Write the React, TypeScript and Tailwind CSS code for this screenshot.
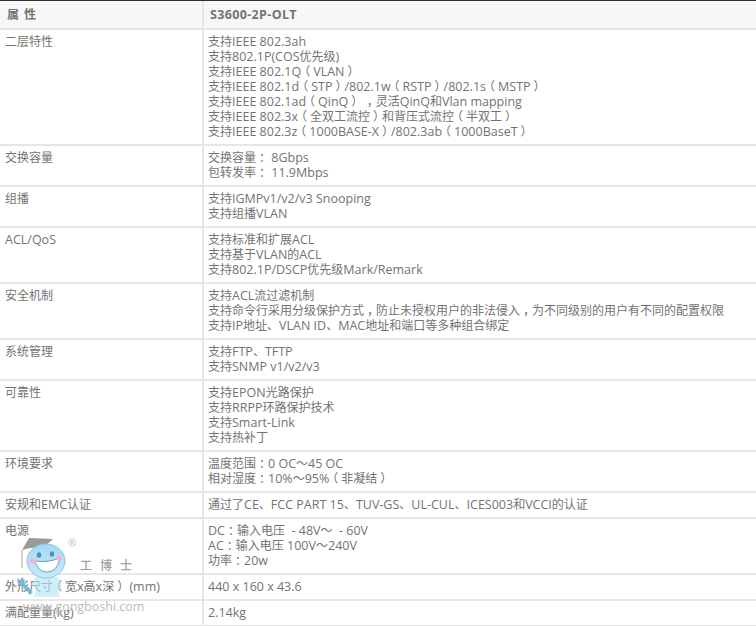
const rows: [string, string[]][] = [
  ["二层特性", ["支持IEEE 802.3ah", "支持802.1P(COS优先级)", "支持IEEE 802.1Q（VLAN）", "支持IEEE 802.1d（STP）/802.1w（RSTP）/802.1s（MSTP）", "支持IEEE 802.1ad（QinQ）\u00a0，灵活QinQ和Vlan mapping", "支持IEEE 802.3x（全双工流控）和背压式流控（半双工）", "支持IEEE 802.3z（1000BASE-X）/802.3ab（1000BaseT）"]],
  ["交换容量", ["交换容量： 8Gbps", "包转发率： 11.9Mbps"]],
  ["组播", ["支持IGMPv1/v2/v3 Snooping", "支持组播VLAN"]],
  ["ACL/QoS", ["支持标准和扩展ACL", "支持基于VLAN的ACL", "支持802.1P/DSCP优先级Mark/Remark"]],
  ["安全机制", ["支持ACL流过滤机制", "支持命令行采用分级保护方式，防止未授权用户的非法侵入，为不同级别的用户有不同的配置权限", "支持IP地址、VLAN ID、MAC地址和端口等多种组合绑定"]],
  ["系统管理", ["支持FTP、TFTP", "支持SNMP v1/v2/v3"]],
  ["可靠性", ["支持EPON光路保护", "支持RRPP环路保护技术", "支持Smart-Link", "支持热补丁"]],
  ["环境要求", ["温度范围：0 OC～45 OC", "相对湿度：10%～95%（非凝结）"]],
  ["安规和EMC认证", ["通过了CE、FCC PART 15、TUV-GS、UL-CUL、ICES003和VCCI的认证"]],
  ["电源", ["DC：输入电压\u00a0\u00a0- 48V～\u00a0\u00a0- 60V", "AC：输入电压 100V～240V", "功率：20w"]],
  ["外形尺寸（宽x高x深）\u00a0(mm)", ["440 x 160 x 43.6"]],
  ["满配重量(kg)", ["2.14kg"]],
];

function Rich({ text }: { text: string }) {
  const parts = text.match(/[\u4e00-\u9fff、～]+|[（）：，]|[^\u4e00-\u9fff、～（）：，]+/g) ?? [];
  return (
    <>
      {parts.map((p, i) => {
        if (p === "（") return <span key={i} className="relative -left-[3px] text-[12px]">{p}</span>;
        if (p === "）" || p === "：" || p === "，") return <span key={i} className="relative left-[3px] text-[12px]">{p}</span>;
        if (/^[\u4e00-\u9fff、～]/.test(p)) return <span key={i} className="text-[12px]">{p}</span>;
        return <span key={i}>{p}</span>;
      })}
    </>
  );
}

export default function App() {
  return (
    <div className="relative h-[626px] w-[756px] overflow-hidden bg-white text-[12.5px] leading-[15px] text-[#737373] [font-family:'Open_Sans','Noto_Sans_CJK_SC',sans-serif]">
      <div className="flex h-[30px] border-t border-b-2 border-t-[#2e2e2e] border-b-[#e6e6e6] bg-[#f7f7f7] font-bold">
        <div className="flex w-[204px] items-center border-r-2 border-[#e6e6e6] pl-[7px] text-[12px] tracking-[1px]">属 性</div>
        <div className="flex items-center pl-[6px] tracking-[0.35px]">S3600-2P-OLT</div>
      </div>
      {rows.map(([name, lines]) => (
        <div key={name} className="flex border-b-2 border-[#e6e6e6]">
          <div className="w-[204px] shrink-0 whitespace-nowrap border-r-2 border-[#e6e6e6] pt-[4px] pb-[5px] pl-[5px]">
            <Rich text={name} />
          </div>
          <div className="pt-[4px] pb-[5px] pl-[4px]">
            {lines.map((l) => (
              <div key={l} className="whitespace-nowrap">
                <Rich text={l} />
              </div>
            ))}
          </div>
        </div>
      ))}
      <div className="pointer-events-none absolute left-0 top-[530px] h-[96px] w-[150px]">
        <svg className="absolute left-0 top-0" width="80" height="72" viewBox="0 0 80 72">
          <defs>
            <linearGradient id="head" x1="0" y1="0" x2="0" y2="1">
              <stop offset="0" stopColor="#a3d8f4" />
              <stop offset="1" stopColor="#c9eafa" />
            </linearGradient>
          </defs>
          <path d="M22 20 L29 8 L53 9 L44 17 L30 18 Z" fill="#9a9a9a" />
          <path d="M22 20 V38" stroke="#a8a8a8" strokeWidth="1" fill="none" />
          <path d="M36 47 L58 47 L62 57 L58 60 L60 67 L34 67 L36 58 L31 55 Z" fill="#b9e3f7" fillOpacity="0.65" />
          <ellipse cx="46" cy="31" rx="19" ry="17" fill="url(#head)" stroke="#86c6ea" strokeWidth="1" />
          <ellipse cx="39" cy="25" rx="2.2" ry="2.8" fill="#4f8fb8" />
          <ellipse cx="52" cy="24" rx="2.2" ry="2.8" fill="#4f8fb8" />
          <path d="M35 31 Q48 33 60 28 Q57 42 47 42 Q38 42 35 31 Z" fill="#fff" stroke="#4e8fb6" strokeWidth="0.8" />
          <ellipse cx="33" cy="31" rx="3.5" ry="2.5" fill="#f2b5cc" />
          <ellipse cx="59" cy="28" rx="3" ry="2.5" fill="#f2b5cc" />
          <path d="M17 48 L20 50 L22 47 L25 50 L24 53 L33 62 L30 65 L22 56 L18 55 Z" fill="#6fb6dc" fillOpacity="0.9" />
        </svg>
        <span className="absolute left-[68px] top-[6px] text-[10px] text-[#b8b8b8]">®</span>
        <span className="absolute left-[80px] top-[27px] whitespace-nowrap text-[12px] font-medium tracking-[8px] text-[#a0a0a0] [font-family:'Noto_Sans_CJK_SC',sans-serif]">工博士</span>
        <span className="absolute left-[23px] top-[69px] whitespace-nowrap text-[12.5px] text-[#bcbcbc]">www.gongboshi.com</span>
      </div>
    </div>
  );
}
